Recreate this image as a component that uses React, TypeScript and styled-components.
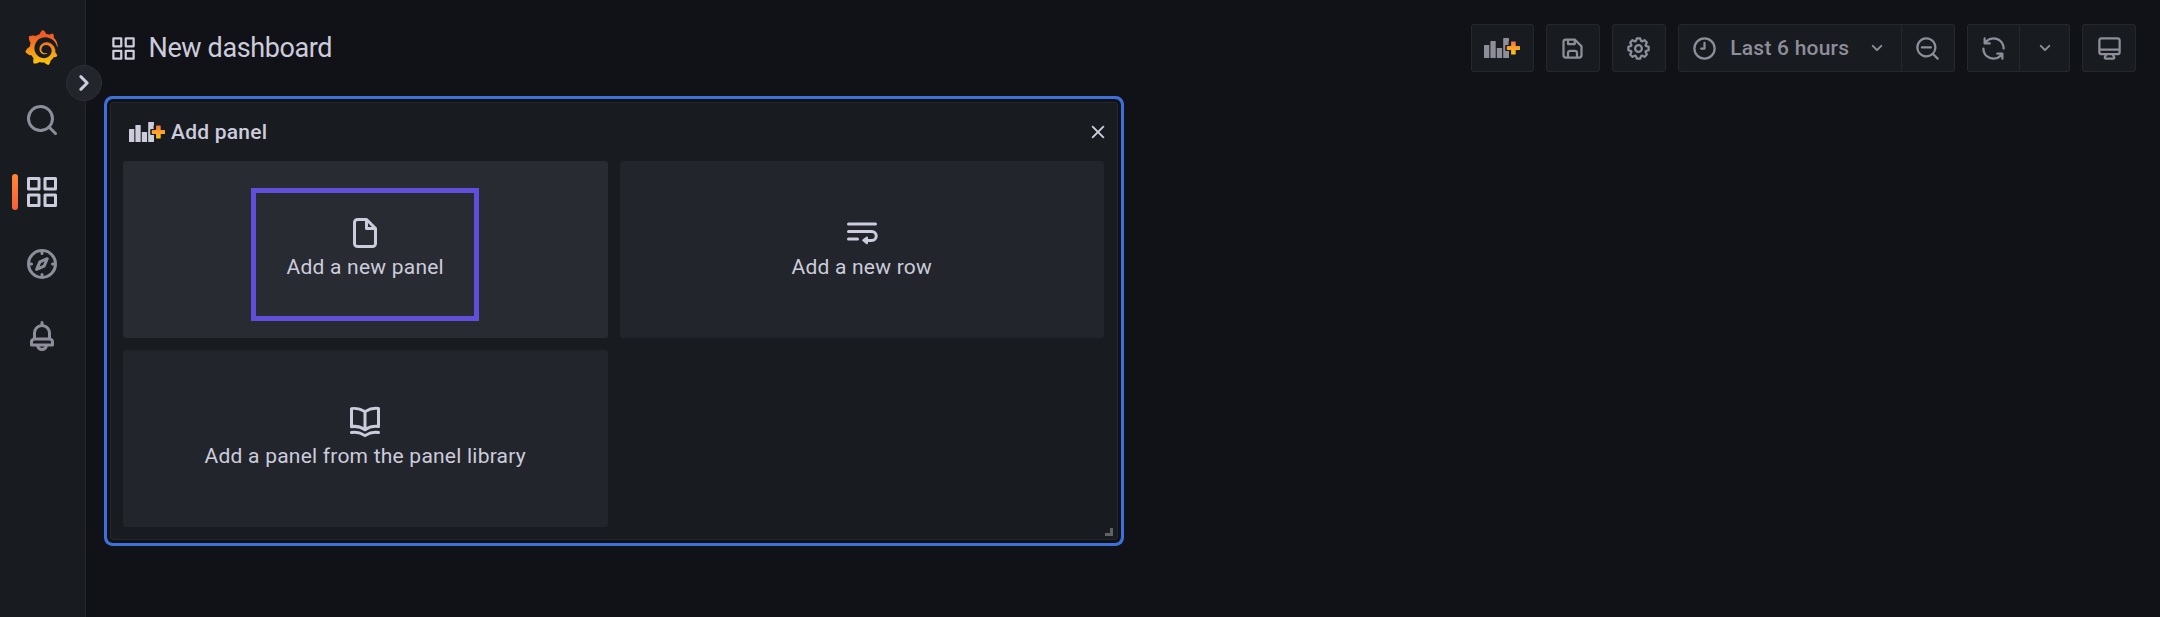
import React from "react";
import styled, { createGlobalStyle, css } from "styled-components";
import { SiGrafana } from "react-icons/si";

const c = {
  canvas: "#111217",
  surface: "#181b1f",
  card: "#22252b",
  cardHover: "#292b32",
  border: "#25272c",
  text: "#ccccdc",
  muted: "#8d8e9a",
  blue: "#3d71d9",
  purple: "#614fdb",
};

const paths = {
  search:
    "M21.71,20.29,18,16.61A9,9,0,1,0,16.61,18l3.68,3.68a1,1,0,0,0,1.42,0A1,1,0,0,0,21.71,20.29ZM11,18a7,7,0,1,1,7-7A7,7,0,0,1,11,18Z",
  apps: "M10,13H3a1,1,0,0,0-1,1v7a1,1,0,0,0,1,1h7a1,1,0,0,0,1-1V14A1,1,0,0,0,10,13ZM9,20H4V15H9ZM21,2H14a1,1,0,0,0-1,1v7a1,1,0,0,0,1,1h7a1,1,0,0,0,1-1V3A1,1,0,0,0,21,2ZM20,9H15V4h5Zm1,4H14a1,1,0,0,0-1,1v7a1,1,0,0,0,1,1h7a1,1,0,0,0,1-1V14A1,1,0,0,0,21,13Zm-1,7H15V15h5ZM10,2H3A1,1,0,0,0,2,3v7a1,1,0,0,0,1,1h7a1,1,0,0,0,1-1V3A1,1,0,0,0,10,2ZM9,9H4V4H9Z",
  compass:
    "M12,2A10,10,0,1,0,22,12,10,10,0,0,0,12,2Zm1,17.93V19a1,1,0,0,0-2,0v.93A8,8,0,0,1,4.07,13H5a1,1,0,0,0,0-2H4.07A8,8,0,0,1,11,4.07V5a1,1,0,0,0,2,0V4.07A8,8,0,0,1,19.93,11H19a1,1,0,0,0,0,2h.93A8,8,0,0,1,13,19.93ZM15.14,7.55l-5,2.12a1,1,0,0,0-.52.52l-2.12,5a1,1,0,0,0,.21,1.1,1,1,0,0,0,.7.3.93.93,0,0,0,.4-.09l5-2.12a1,1,0,0,0,.52-.52l2.12-5a1,1,0,0,0-1.31-1.31Zm-2.49,5.1-2.28,1,1-2.28,2.28-1Z",
  bell: "M18,13.18V10a6,6,0,0,0-5-5.91V3a1,1,0,0,0-2,0V4.09A6,6,0,0,0,6,10v3.18A3,3,0,0,0,4,16v2a1,1,0,0,0,1,1H8.14a4,4,0,0,0,7.72,0H19a1,1,0,0,0,1-1V16A3,3,0,0,0,18,13.18ZM8,10a4,4,0,0,1,8,0v3H8Zm4,10a2,2,0,0,1-1.72-1h3.44A2,2,0,0,1,12,20Zm6-3H6V16a1,1,0,0,1,1-1H17a1,1,0,0,1,1,1Z",
  save: "M20.71,9.29l-6-6a1,1,0,0,0-.32-.21A1.09,1.09,0,0,0,14,3H6A3,3,0,0,0,3,6V18a3,3,0,0,0,3,3H18a3,3,0,0,0,3-3V10A1,1,0,0,0,20.71,9.29ZM9,5h4V7H9Zm6,14H9V16a1,1,0,0,1,1-1h4a1,1,0,0,1,1,1Zm4-1a1,1,0,0,1-1,1H17V16a3,3,0,0,0-3-3H10a3,3,0,0,0-3,3v3H6a1,1,0,0,1-1-1V6A1,1,0,0,1,6,5H7V8A1,1,0,0,0,8,9h6a1,1,0,0,0,1-1V6.41l4,4Z",
  cog: "M21.32,9.55l-1.89-.63.89-1.78A1,1,0,0,0,20.13,6L18,3.87a1,1,0,0,0-1.15-.19l-1.78.89-.63-1.89A1,1,0,0,0,13.5,2h-3a1,1,0,0,0-.95.68L8.92,4.57,7.14,3.68A1,1,0,0,0,6,3.87L3.87,6a1,1,0,0,0-.19,1.15l.89,1.78-1.89.63A1,1,0,0,0,2,10.5v3a1,1,0,0,0,.68.95l1.89.63-.89,1.78A1,1,0,0,0,3.87,18L6,20.13a1,1,0,0,0,1.15.19l1.78-.89.63,1.89a1,1,0,0,0,.95.68h3a1,1,0,0,0,.95-.68l.63-1.89,1.78.89A1,1,0,0,0,18,20.13L20.13,18a1,1,0,0,0,.19-1.15l-.89-1.78,1.89-.63A1,1,0,0,0,22,13.5v-3A1,1,0,0,0,21.32,9.55ZM20,12.78l-1.2.4A2,2,0,0,0,17.64,16l.57,1.14-1.1,1.1L16,17.64a2,2,0,0,0-2.79,1.16l-.4,1.2H11.22l-.4-1.2A2,2,0,0,0,8,17.64l-1.14.57-1.1-1.1L6.36,16A2,2,0,0,0,5.2,13.18L4,12.78V11.22l1.2-.4A2,2,0,0,0,6.36,8L5.79,6.89l1.1-1.1L8,6.36A2,2,0,0,0,10.82,5.2l.4-1.2h1.56l.4,1.2A2,2,0,0,0,16,6.36l1.14-.57,1.1,1.1L17.64,8a2,2,0,0,0,1.16,2.79l1.2.4ZM12,8a4,4,0,1,0,4,4A4,4,0,0,0,12,8Zm0,6a2,2,0,1,1,2-2A2,2,0,0,1,12,14Z",
  clock:
    "M12,2A10,10,0,1,0,22,12,10,10,0,0,0,12,2Zm0,18a8,8,0,1,1,8-8A8,8,0,0,1,12,20ZM12,6a1,1,0,0,0-1,1v4H9a1,1,0,0,0,0,2h3a1,1,0,0,0,1-1V7A1,1,0,0,0,12,6Z",
  down: "M17,9.17a1,1,0,0,0-1.41,0L12,12.71,8.46,9.17a1,1,0,0,0-1.41,0,1,1,0,0,0,0,1.42l4.24,4.24a1,1,0,0,0,1.42,0L17,10.59A1,1,0,0,0,17,9.17Z",
  right:
    "M14.83,11.29,10.59,7.05a1,1,0,0,0-1.42,0,1,1,0,0,0,0,1.41L12.71,12,9.17,15.54a1,1,0,0,0,0,1.41,1,1,0,0,0,.71.29,1,1,0,0,0,.71-.29l4.24-4.24A1,1,0,0,0,14.83,11.29Z",
  zoomOut:
    "M21.71,20.29,18,16.61A9,9,0,1,0,16.61,18l3.68,3.68a1,1,0,0,0,1.42,0A1,1,0,0,0,21.71,20.29ZM11,18a7,7,0,1,1,7-7A7,7,0,0,1,11,18Zm4-8H7a1,1,0,0,0,0,2h8a1,1,0,0,0,0-2Z",
  sync: "M19.91,15.51H15.38a1,1,0,0,0,0,2h2.4A8,8,0,0,1,4,12a1,1,0,1,0-2,0,10,10,0,0,0,16.88,7.23V21a1,1,0,0,0,2,0V16.5A1,1,0,0,0,19.91,15.51ZM12,2A10,10,0,0,0,5.12,4.77V3a1,1,0,0,0-2,0V7.5a1,1,0,0,0,1,1h4.5a1,1,0,0,0,0-2H6.22A8,8,0,0,1,20,12a1,1,0,0,0,2,0A10,10,0,0,0,12,2Z",
  monitor:
    "M19,2H5A3,3,0,0,0,2,5V15a3,3,0,0,0,3,3H7.64l-.58,1a2,2,0,0,0,0,2,2,2,0,0,0,1.75,1h6.46A2,2,0,0,0,17,21a2,2,0,0,0,0-2l-.59-1H19a3,3,0,0,0,3-3V5A3,3,0,0,0,19,2ZM8.77,20,10,18H14l1.2,2ZM20,15a1,1,0,0,1-1,1H5a1,1,0,0,1-1-1V14H20Zm0-3H4V5A1,1,0,0,1,5,4H19a1,1,0,0,1,1,1Z",
  file: "M20,8.94a1.31,1.31,0,0,0-.06-.27l0-.09a1.07,1.07,0,0,0-.19-.28h0l-6-6h0a1.07,1.07,0,0,0-.28-.19.32.32,0,0,0-.09,0A.88.88,0,0,0,13.05,2H7A3,3,0,0,0,4,5V19a3,3,0,0,0,3,3H17a3,3,0,0,0,3-3V9S20,9,20,8.94ZM14,5.41,16.59,8H14ZM18,19a1,1,0,0,1-1,1H7a1,1,0,0,1-1-1V5A1,1,0,0,1,7,4h5V9a1,1,0,0,0,1,1h5Z",
  wrap: "M3,5H21a1,1,0,0,1,0,2H3A1,1,0,0,1,3,5ZM3,10H18.5a4,4,0,0,1,0,8H16v.8a.7.7,0,0,1-1.2.5l-2.4-1.9a.6.6,0,0,1,0-1l2.4-1.9a.7.7,0,0,1,1.2.5V16h2.5a2,2,0,0,0,0-4H3a1,1,0,0,1,0-2ZM3,15H9a1,1,0,0,1,0,2H3a1,1,0,0,1,0-2Z",
  book: "M21.17,2.06A13.1,13.1,0,0,0,19,1.87a12.94,12.94,0,0,0-7,2.05,12.94,12.94,0,0,0-7-2,13.1,13.1,0,0,0-2.17.19,1,1,0,0,0-.83,1v12a1,1,0,0,0,1.17,1,10.9,10.9,0,0,1,8.25,1.91l.12.07.11,0a.91.91,0,0,0,.7,0l.11,0,.12-.07A10.9,10.9,0,0,1,20.83,16,1,1,0,0,0,22,15V3A1,1,0,0,0,21.17,2.06ZM11,15.35a12.87,12.87,0,0,0-6-1.48c-.33,0-.66,0-1,0v-10a8.69,8.69,0,0,1,1,0,10.86,10.86,0,0,1,6,1.8Zm9-1.44c-.34,0-.67,0-1,0a12.87,12.87,0,0,0-6,1.48V5.67a10.86,10.86,0,0,1,6-1.8,8.69,8.69,0,0,1,1,0Zm1.17,4.15A13.1,13.1,0,0,0,19,17.87a12.94,12.94,0,0,0-7,2.05,12.94,12.94,0,0,0-7-2.05,13.1,13.1,0,0,0-2.17.19A1,1,0,0,0,2,19.21a1,1,0,0,0,1.17.79,10.9,10.9,0,0,1,8.25,1.91,1,1,0,0,0,1.16,0A10.9,10.9,0,0,1,20.83,20,1,1,0,0,0,22,19.21,1,1,0,0,0,21.17,18.06Z",
  close:
    "M13.41,12l6.3-6.29a1,1,0,1,0-1.42-1.42L12,10.59,5.71,4.29A1,1,0,0,0,4.29,5.71L10.59,12l-6.3,6.29a1,1,0,0,0,0,1.42,1,1,0,0,0,1.42,0L12,13.41l6.29,6.3a1,1,0,0,0,1.42,0,1,1,0,0,0,0-1.42Z",
};

type IconName = keyof typeof paths;

const Svg = styled.svg`
  display: block;
  flex: none;
  fill: currentColor;
`;

const Icon = ({ name, size = 27 }: { name: IconName; size?: number }) => (
  <Svg width={size} height={size} viewBox="0 0 24 24" aria-hidden>
    <path d={paths[name]} />
  </Svg>
);

const PanelAddIcon = ({ id }: { id: string }) => (
  <Svg width="36" height="20" viewBox="0 0 36 20" aria-hidden>
    <defs>
      <linearGradient id={id} x1="0" y1="0" x2="0" y2="1">
        <stop offset="0" stopColor="#f2733f" />
        <stop offset="0.5" stopColor="#f9a12c" />
        <stop offset="1" stopColor="#fcc60e" />
      </linearGradient>
    </defs>
    <rect x="0" y="7" width="5.3" height="13" rx="0.6" />
    <rect x="6.4" y="3" width="5.3" height="17" rx="0.6" />
    <rect x="12.8" y="10" width="5.3" height="10" rx="0.6" />
    <path d="M19.8,0h4.6a.6.6,0,0,1,.6.6V3.2H24.6V7H22.2a1,1,0,0,0-1,1v4a1,1,0,0,0,1,1H25v6.4a.6.6,0,0,1-.6.6H19.8a.6.6,0,0,1-.6-.6V.6A.6.6,0,0,1,19.8,0Z" />
    <path
      fill={`url(#${id})`}
      d="M27.6,3.4h3.6a.5.5,0,0,1,.5.5V8h3.8a.5.5,0,0,1,.5.5v3a.5.5,0,0,1-.5.5H31.7v4.1a.5.5,0,0,1-.5.5H27.6a.5.5,0,0,1-.5-.5V12H23.3a.5.5,0,0,1-.5-.5v-3a.5.5,0,0,1,.5-.5h3.8V3.9A.5.5,0,0,1,27.6,3.4Z"
    />
  </Svg>
);

const GlobalStyle = createGlobalStyle`
  *, *::before, *::after { box-sizing: border-box; }
  body {
    margin: 0;
    background: ${c.canvas};
    color: ${c.text};
    font-family: Roboto, "Liberation Sans", sans-serif;
    font-size: 21px;
    letter-spacing: 0.01071em;
  }
  button { font: inherit; letter-spacing: inherit; color: inherit; padding: 0; margin: 0; }
`;

const Page = styled.div`
  display: flex;
  height: 617px;
  overflow: hidden;
`;

const Sidebar = styled.nav`
  position: relative;
  display: flex;
  flex-direction: column;
  align-items: center;
  width: 86px;
  flex: none;
  padding-top: 30px;
  background: ${c.surface};
  border-right: 1px solid ${c.border};
`;

const Logo = styled.a`
  display: flex;
  height: 36px;
  margin-bottom: 18px;
  padding-right: 2px;
`;

const NavItem = styled.a<{ $active?: boolean }>`
  position: relative;
  display: flex;
  align-items: center;
  justify-content: center;
  width: 100%;
  height: 72px;
  padding-right: 1px;
  color: ${(p) => (p.$active ? c.text : c.muted)};
  ${(p) =>
    p.$active &&
    css`
      &::before {
        content: "";
        position: absolute;
        left: 12px;
        top: 18px;
        width: 6px;
        height: 36px;
        border-radius: 3px;
        background: linear-gradient(#ff8833, #f55f3e);
      }
    `}
`;

const Expand = styled.button`
  position: absolute;
  z-index: 1;
  left: 66px;
  top: 65px;
  display: flex;
  align-items: center;
  justify-content: center;
  width: 36px;
  height: 36px;
  border: 1px solid #2d2f35;
  border-radius: 50%;
  background: ${c.card};
`;

const Main = styled.main`
  flex: 1;
  min-width: 0;
`;

const TopBar = styled.header`
  display: flex;
  align-items: center;
  justify-content: space-between;
  height: 96px;
  padding: 0 24px;
`;

const Title = styled.h1`
  display: flex;
  align-items: center;
  gap: 11.5px;
  margin: 0;
  font-size: 27px;
  font-weight: 400;
  letter-spacing: -0.38px;
`;

const Actions = styled.div`
  display: flex;
  gap: 12px;
`;

const ButtonGroup = styled.div`
  display: flex;
`;

const ToolButton = styled.button<{ $width: number; $inset?: number }>`
  display: flex;
  align-items: center;
  justify-content: center;
  width: ${(p) => p.$width}px;
  height: 48px;
  padding-right: ${(p) => p.$inset ?? 0}px;
  border: 1px solid ${c.border};
  border-radius: 3px;
  background: ${c.surface};
  color: ${c.muted};
  font-weight: 500;

  ${ButtonGroup} &:not(:first-child) {
    border-left: 0;
    border-top-left-radius: 0;
    border-bottom-left-radius: 0;
  }
  ${ButtonGroup} &:not(:last-child) {
    border-top-right-radius: 0;
    border-bottom-right-radius: 0;
  }
`;

const TimeLabel = styled.span`
  margin: 0 16px 0 12.5px;
`;

const Panel = styled.section`
  position: relative;
  width: 1008px;
  height: 438px;
  margin: 6px 0 0 24px;
  border: 1px solid ${c.border};
  border-radius: 3px;
  background: ${c.surface};
  box-shadow: 0 0 0 3px ${c.canvas}, 0 0 0 6px ${c.blue};
`;

const PanelHeader = styled.div`
  display: flex;
  align-items: center;
  height: 58px;
  padding: 0 10px 0 18px;
  font-weight: 500;
`;

const PanelTitle = styled.span`
  flex: 1;
  margin-left: 6px;
`;

const Close = styled.button`
  display: flex;
  border: 0;
  background: none;

  path {
    stroke: currentColor;
    stroke-width: 0.8px;
  }
`;

const Cards = styled.div`
  display: grid;
  grid-template-columns: 1fr 1fr;
  grid-auto-rows: 177px;
  gap: 12px;
  padding: 0 13px 0 12px;
`;

const Card = styled.button<{ $hovered?: boolean }>`
  display: flex;
  align-items: center;
  justify-content: center;
  border: 0;
  border-radius: 3px;
  background: ${(p) => (p.$hovered ? c.cardHover : c.card)};
`;

const CardBody = styled.span<{ $marked?: boolean }>`
  display: flex;
  flex-direction: column;
  align-items: center;
  padding-top: 22px;
  width: 228px;
  height: 133px;
  margin-top: 10px;
  white-space: nowrap;
  border: 5px solid ${(p) => (p.$marked ? c.purple : "transparent")};
`;

const CardLabel = styled.span`
  line-height: 32px;
`;

const ResizeHandle = styled.span`
  position: absolute;
  right: 4px;
  bottom: 3px;
  width: 8px;
  height: 8px;
  border: solid #606164;
  border-width: 0 3px 3px 0;
`;

export default function App() {
  return (
    <>
      <GlobalStyle />
      <Page>
        <Sidebar>
          <Logo>
            <svg width="0" height="0">
              <linearGradient id="logo" x1="0" y1="0" x2="0" y2="1">
                <stop offset="0.15" stopColor="#f05a28" />
                <stop offset="1" stopColor="#fbca0a" />
              </linearGradient>
            </svg>
            <SiGrafana size={35} fill="url(#logo)" />
          </Logo>
          <NavItem><Icon name="search" size={36} /></NavItem>
          <NavItem $active><Icon name="apps" size={36} /></NavItem>
          <NavItem><Icon name="compass" size={36} /></NavItem>
          <NavItem><Icon name="bell" size={36} /></NavItem>
          <Expand aria-label="Expand menu"><Icon name="right" size={36} /></Expand>
        </Sidebar>
        <Main>
          <TopBar>
            <Title>
              <Icon name="apps" />
              New dashboard
            </Title>
            <Actions>
              <ToolButton $width={63} $inset={1}><PanelAddIcon id="plus-toolbar" /></ToolButton>
              <ToolButton $width={54} $inset={1}><Icon name="save" /></ToolButton>
              <ToolButton $width={54} $inset={1}><Icon name="cog" /></ToolButton>
              <ButtonGroup>
                <ToolButton $width={224}>
                  <Icon name="clock" />
                  <TimeLabel>Last 6 hours</TimeLabel>
                  <Icon name="down" size={24} />
                </ToolButton>
                <ToolButton $width={53} $inset={1}><Icon name="zoomOut" /></ToolButton>
              </ButtonGroup>
              <ButtonGroup>
                <ToolButton $width={53}><Icon name="sync" /></ToolButton>
                <ToolButton $width={50}><Icon name="down" size={24} /></ToolButton>
              </ButtonGroup>
              <ToolButton $width={54}><Icon name="monitor" /></ToolButton>
            </Actions>
          </TopBar>
          <Panel>
            <PanelHeader>
              <PanelAddIcon id="plus-panel" />
              <PanelTitle>Add panel</PanelTitle>
              <Close aria-label="Close"><Icon name="close" size={18} /></Close>
            </PanelHeader>
            <Cards>
              <Card $hovered>
                <CardBody $marked>
                  <Icon name="file" size={36} />
                  <CardLabel>Add a new panel</CardLabel>
                </CardBody>
              </Card>
              <Card>
                <CardBody>
                  <Icon name="wrap" size={36} />
                  <CardLabel>Add a new row</CardLabel>
                </CardBody>
              </Card>
              <Card>
                <CardBody>
                  <Icon name="book" size={36} />
                  <CardLabel>Add a panel from the panel library</CardLabel>
                </CardBody>
              </Card>
            </Cards>
            <ResizeHandle />
          </Panel>
        </Main>
      </Page>
    </>
  );
}
